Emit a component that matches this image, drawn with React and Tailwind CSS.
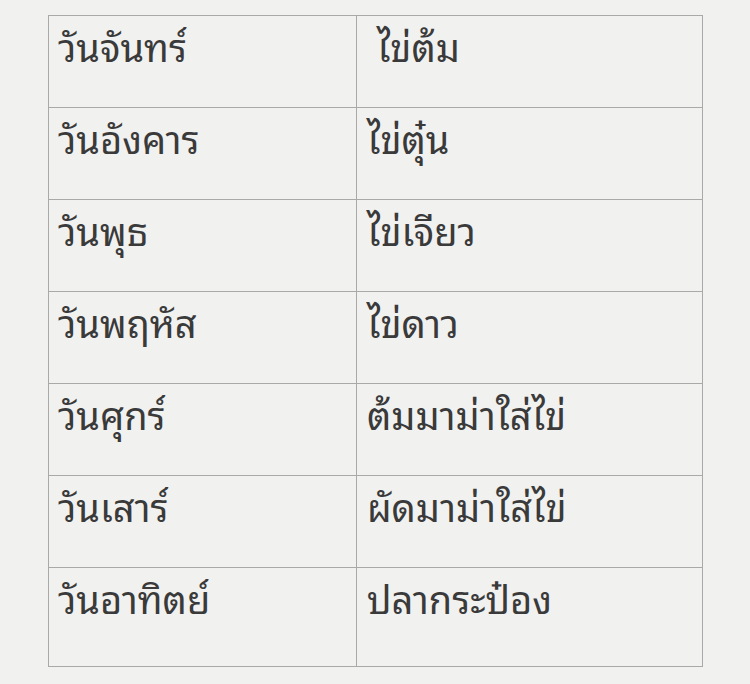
const rows = [
    ['วันจันทร์', '\u00a0ไข่ต้ม'],
    ['วันอังคาร', 'ไข่ตุ๋น'],
    ['วันพุธ', 'ไข่เจียว'],
    ['วันพฤหัส', 'ไข่ดาว'],
    ['วันศุกร์', 'ต้มมาม่าใส่ไข่'],
    ['วันเสาร์', 'ผัดมาม่าใส่ไข่'],
    ['วันอาทิตย์', 'ปลากระป๋อง'],
];

const App = () => {
    return (
        <div className="w-[750px] h-[684px] bg-[#f1f1f0] pt-[15px] pl-[48px]" style={{ fontFamily: '"Noto Sans Thai Looped", Garuda, Loma, "Noto Sans", sans-serif' }}>
            <table className="w-[655px] border-collapse text-[#3a3a3a] text-[38px]">
                <tbody>
                    {rows.map(([day, food], i) => (
                        <tr key={day} className={i === rows.length - 1 ? 'h-[99px]' : 'h-[92px]'}>
                            <td className="w-[308px] border border-[#a9a9a9] align-top pl-[9px] pt-[7px] leading-[44px]">{day}</td>
                            <td className="border border-[#a9a9a9] align-top pl-[10px] pt-[7px] leading-[44px]">{food}</td>
                        </tr>
                    ))}
                </tbody>
            </table>
        </div>
    );
};

export default App;
